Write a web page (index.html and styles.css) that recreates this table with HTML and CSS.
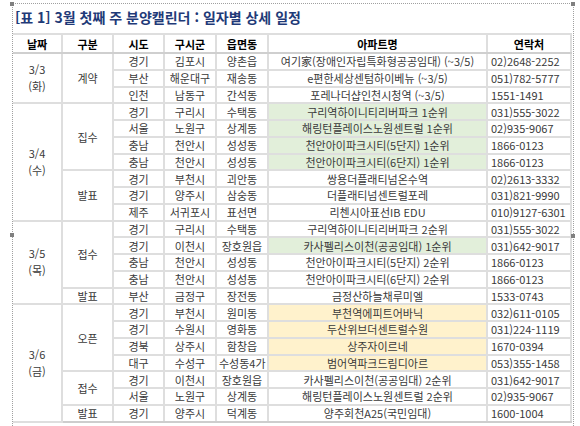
FILE: index.html
```html
<!DOCTYPE html>
<html lang="ko">
<head>
<meta charset="utf-8">
<title>분양캘린더</title>
<link rel="stylesheet" href="styles.css">
</head>
<body>
<div class="frame">
  <span class="handle h-tl"></span>
  <span class="handle h-tr"></span>
  <span class="handle h-ml"></span>
  <span class="handle h-mr"></span>
  <h1 class="title">[표 1] 3월 첫째 주 분양캘린더 : 일자별 상세 일정</h1>
  <table class="cal">
    <colgroup>
      <col class="c-date"><col class="c-type"><col class="c-sido"><col class="c-gu"><col class="c-dong"><col class="c-apt"><col class="c-tel">
    </colgroup>
    <thead>
      <tr><th class="first">날짜</th><th>구분</th><th>시도</th><th>구시군</th><th>읍면동</th><th>아파트명</th><th>연락처</th></tr>
    </thead>
    <tbody>
      <tr class="grp"><td class="first" rowspan="3">3/3<br>(화)</td><td rowspan="3">계약</td><td>경기</td><td>김포시</td><td>양촌읍</td><td class="apt">여기家(장애인자립특화형공공임대) (~3/5)</td><td class="tel">02)2648-2252</td></tr>
      <tr><td>부산</td><td>해운대구</td><td>재송동</td><td class="apt">e편한세상센텀하이베뉴 (~3/5)</td><td class="tel">051)782-5777</td></tr>
      <tr><td>인천</td><td>남동구</td><td>간석동</td><td class="apt">포레나더샵인천시청역 (~3/5)</td><td class="tel">1551-1491</td></tr>

      <tr class="grp"><td class="first" rowspan="7">3/4<br>(수)</td><td rowspan="4">집수</td><td>경기</td><td>구리시</td><td>수택동</td><td class="apt green">구리역하이니티리버파크 1순위</td><td class="tel">031)555-3022</td></tr>
      <tr><td>서울</td><td>노원구</td><td>상계동</td><td class="apt green">해링턴플레이스노원센트럴 1순위</td><td class="tel">02)935-9067</td></tr>
      <tr><td>충남</td><td>천안시</td><td>성성동</td><td class="apt green">천안아이파크시티(5단지) 1순위</td><td class="tel">1866-0123</td></tr>
      <tr><td>충남</td><td>천안시</td><td>성성동</td><td class="apt green">천안아이파크시티(6단지) 1순위</td><td class="tel">1866-0123</td></tr>
      <tr class="sub"><td rowspan="3">발표</td><td>경기</td><td>부천시</td><td>괴안동</td><td class="apt">쌍용더플래티넘온수역</td><td class="tel">02)2613-3332</td></tr>
      <tr><td>경기</td><td>양주시</td><td>삼숭동</td><td class="apt">더플래티넘센트럴포레</td><td class="tel">031)821-9990</td></tr>
      <tr><td>제주</td><td>서귀포시</td><td>표선면</td><td class="apt">리첸시아표선IB EDU</td><td class="tel">010)9127-6301</td></tr>

      <tr class="grp"><td class="first" rowspan="5">3/5<br>(목)</td><td rowspan="4">접수</td><td>경기</td><td>구리시</td><td>수택동</td><td class="apt">구리역하이니티리버파크 2순위</td><td class="tel">031)555-3022</td></tr>
      <tr><td>경기</td><td>이천시</td><td>장호원읍</td><td class="apt green">카사펠리스이천(공공임대) 1순위</td><td class="tel">031)642-9017</td></tr>
      <tr><td>충남</td><td>천안시</td><td>성성동</td><td class="apt">천안아이파크시티(5단지) 2순위</td><td class="tel">1866-0123</td></tr>
      <tr><td>충남</td><td>천안시</td><td>성성동</td><td class="apt">천안아이파크시티(6단지) 2순위</td><td class="tel">1866-0123</td></tr>
      <tr class="sub"><td>발표</td><td>부산</td><td>금정구</td><td>장전동</td><td class="apt">금정산하늘채루미엘</td><td class="tel">1533-0743</td></tr>

      <tr class="grp"><td class="first" rowspan="7">3/6<br>(금)</td><td rowspan="4">오픈</td><td>경기</td><td>부천시</td><td>원미동</td><td class="apt yellow">부천역에피트어바닉</td><td class="tel">032)611-0105</td></tr>
      <tr><td>경기</td><td>수원시</td><td>영화동</td><td class="apt yellow">두산위브더센트럴수원</td><td class="tel">031)224-1119</td></tr>
      <tr><td>경북</td><td>상주시</td><td>함창읍</td><td class="apt yellow">상주자이르네</td><td class="tel">1670-0394</td></tr>
      <tr><td>대구</td><td>수성구</td><td>수성동4가</td><td class="apt yellow">범어역파크드림디아르</td><td class="tel">053)355-1458</td></tr>
      <tr class="sub"><td rowspan="2">접수</td><td>경기</td><td>이천시</td><td>장호원읍</td><td class="apt">카사펠리스이천(공공임대) 2순위</td><td class="tel">031)642-9017</td></tr>
      <tr><td>서울</td><td>노원구</td><td>상계동</td><td class="apt">해링턴플레이스노원센트럴 2순위</td><td class="tel">02)935-9067</td></tr>
      <tr class="sub last"><td>발표</td><td>경기</td><td>양주시</td><td>덕계동</td><td class="apt">양주회천A25(국민임대)</td><td class="tel">1600-1004</td></tr>
    </tbody>
  </table>
</div>
</body>
</html>
```

FILE: styles.css
```css
html, body {
  margin: 0;
  padding: 0;
  background: #ffffff;
}

body {
  font-family: "Noto Sans CJK KR", "Noto Sans", sans-serif;
  color: #3a3a3a;
}

.frame {
  position: relative;
  margin: 3px 0 0 12px;
  width: 560px;
  height: 430px;
  border-left: 1px dotted #a0a0a0;
  border-right: 1px dotted #a0a0a0;
  border-top: 1px dotted #a0a0a0;
}

.handle {
  position: absolute;
  width: 4px;
  height: 4px;
  background: #808080;
}
.h-tl { left: -3px; top: -2px; }
.h-tr { right: -2px; top: -2px; }
.h-ml { left: -3px; top: 229px; }
.h-mr { right: -2px; top: 230px; }

.title {
  margin: 0;
  padding-left: 2px;
  height: 29px;
  line-height: 27px;
  font-size: 14px;
  font-weight: bold;
  color: #1f3a78;
  white-space: nowrap;
}

.cal {
  border-collapse: collapse;
  table-layout: fixed;
  width: 558px;
  font-size: 11px;
}

.c-date { width: 49px; }
.c-type { width: 51px; }
.c-sido { width: 51px; }
.c-gu   { width: 52px; }
.c-dong { width: 52px; }
.c-apt  { width: 219px; }
.c-tel  { width: 84px; }

.cal th,
.cal td {
  border: 2px solid #dedede;
  padding: 0 2px;
  text-align: center;
  vertical-align: middle;
  line-height: 14px;
  white-space: nowrap;
  overflow: hidden;
}

.cal th {
  height: 17px;
  font-weight: bold;
  color: #000000;
  border-bottom-color: #cfcfcf;
}

.cal tbody tr {
  height: 16.75px;
}

.cal .first {
  border-left: none;
}

.cal tr.grp td {
  border-top-color: #c6c6c6;
}

.cal tr.sub td {
  border-top-color: #cdcdcd;
}

.cal tr.last td {
  border-bottom-color: #cdcdcd;
}

.cal td.first {
  line-height: 17px;
}

.cal td.tel {
  text-align: left;
  padding-left: 3px;
}

.cal td.green {
  background: #e2efda;
}

.cal td.yellow {
  background: #fff2cc;
}
```
